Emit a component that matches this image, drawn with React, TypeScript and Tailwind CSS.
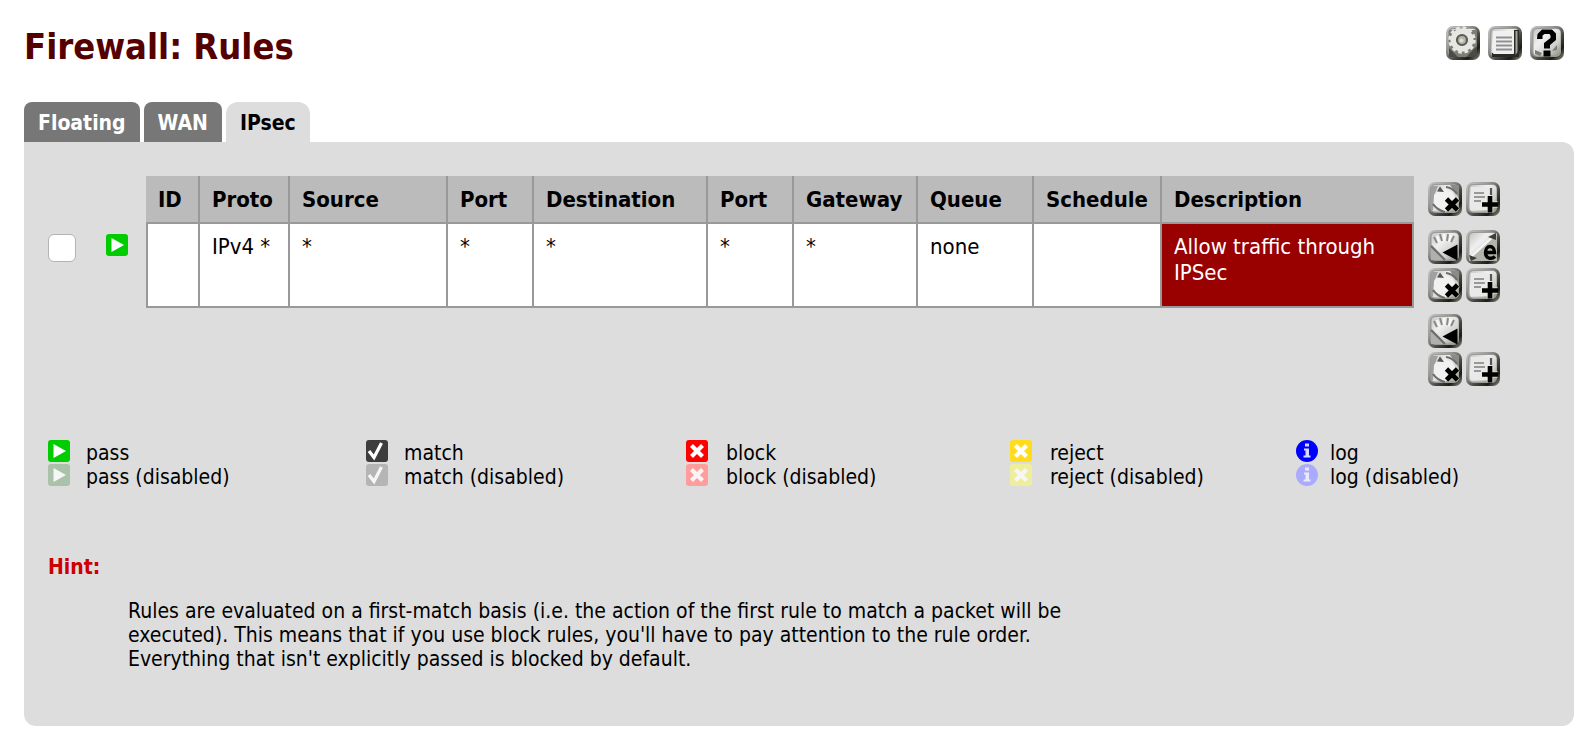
import React from "react";

type StatusKind = "pass" | "match" | "block" | "reject" | "log";

function IconFrame({ id, children }: { id: string; children: React.ReactNode }) {
  return (
    <svg viewBox="0 0 34 34" className="block h-[34px] w-[34px]" aria-hidden="true">
      <defs>
        <linearGradient id={`${id}-edge`} x1="0" y1="0" x2="1" y2="1">
          <stop offset="0" stopColor="#c6c6c6" />
          <stop offset="0.35" stopColor="#989896" />
          <stop offset="0.6" stopColor="#4a4a45" />
          <stop offset="0.8" stopColor="#1c1c16" />
          <stop offset="1" stopColor="#99998c" />
        </linearGradient>
        <linearGradient id={`${id}-face`} x1="0" y1="0" x2="1" y2="1">
          <stop offset="0" stopColor="#c4c4c4" />
          <stop offset="0.35" stopColor="#f0f0f0" />
          <stop offset="0.7" stopColor="#d0d0cc" />
          <stop offset="1" stopColor="#8c8c80" />
        </linearGradient>
        <filter id={`${id}-soft`} x="0" y="0" width="1" height="1">
          <feGaussianBlur stdDeviation="0.7" />
        </filter>
        <clipPath id={`${id}-clip`}>
          <rect width="34" height="34" rx="7" />
        </clipPath>
      </defs>
      <g clipPath={`url(#${id}-clip)`}>
        <rect width="34" height="34" fill={`url(#${id}-edge)`} />
        <g filter={`url(#${id}-soft)`}>
          <rect width="34" height="34" fill="none" />
          <rect x="2" y="2" width="29" height="29" rx="5" fill="#9a9a97" />
          <rect x="3.500" y="3" width="27" height="26.500" rx="4" fill={`url(#${id}-face)`} />
          {children}
        </g>
      </g>
    </svg>
  );
}

function GearIcon() {
  return (
    <IconFrame id="gear">
      <path d="M3 4H31V31H3Z" fill="#7d7d76" />
      <path d="M3 22L12 31H3ZM20 31L31 20V31Z" fill="#4c4c44" />
      <circle cx="16" cy="14" r="12" fill="none" stroke="#e6e6e4" strokeWidth="3.500" strokeDasharray="3.600 2.700" />
      <circle cx="16" cy="14" r="8.500" fill="none" stroke="#e6e6e3" strokeWidth="6" />
      <circle cx="16" cy="14" r="5" fill="#b4b4aa" stroke="#5c5c56" strokeWidth="2.200" />
      <circle cx="15.500" cy="14.500" r="2" fill="#e0dccf" />
    </IconFrame>
  );
}

function LogIcon() {
  return (
    <IconFrame id="page">
      <path d="M26 4H31V31H4V27H26Z" fill="#2c2c28" />
      <path d="M27.500 5H29.500V26L27.500 29Z" fill="#a4a49a" />
      <rect x="5" y="5" width="21" height="23" rx="1" fill="#f0f0f0" />
      <path d="M8 11.500H24M8 15.500H24M8 19.500H24M8 23.500H24" stroke="#909090" strokeWidth="2" />
    </IconFrame>
  );
}

function HelpIcon() {
  return (
    <IconFrame id="help">
      <path d="M5 24L12 27L10 30L5 28ZM22 25L27 19V24Z" fill="#7b7b75" />
      <path d="M7 13H12.500V9.500L14.500 8H19.500L20.500 9.500V12L14 17V22.500H20V19L26 14V7.500L22 3.500H12L7.500 8Z" fill="#000" />
      <rect x="13.500" y="24.500" width="7" height="6" fill="#000" />
    </IconFrame>
  );
}

function DeleteIcon({ id }: { id: string }) {
  return (
    <IconFrame id={id}>
      <path d="M3 4H10L6 14L5 28H3Z" fill="#a0a0a0" />
      <path d="M22 3H31V16Z" fill="#8b8b88" />
      <path d="M6 13L12 7L24 10L29 18L17 30L6 23Z" fill="#f1f1f1" />
      <path d="M9 9.500L16 10L12 4.500Z" fill="#555" />
      <path d="M18 5Q25 6 29 12M5 22Q9 28 17 30" fill="none" stroke="#6d6d6d" strokeWidth="2.200" />
      <path d="M18.500 17L30 28.500M30 17L18.500 28.500" stroke="#ddddc0" strokeWidth="6" opacity="0.5" />
      <path d="M18.500 17L29.500 28M29.500 17L18.500 28" stroke="#000" strokeWidth="4.600" />
    </IconFrame>
  );
}

function AddIcon({ id }: { id: string }) {
  return (
    <IconFrame id={id}>
      <path d="M5 5H25V28H5Z" fill="#e9e9e9" />
      <path d="M25 6V13" stroke="#555" strokeWidth="2.200" />
      <path d="M8 11H18M8 15H19M8 19H15" stroke="#999" strokeWidth="1.800" />
      <path d="M24 14V30.500M16 22.500H32" stroke="#e8e8cf" strokeWidth="7" opacity="0.5" />
      <path d="M24 14V30.500M16 22.500H32" stroke="#000" strokeWidth="4.600" />
    </IconFrame>
  );
}

function MoveIcon({ id }: { id: string }) {
  return (
    <IconFrame id={id}>
      <path d="M3 14L18 30H3Z" fill="#b0b0ae" />
      <path d="M6 7L9 13M12 4L14 11M20 4L19 11M26 6L23 12" stroke="#8a8a8a" strokeWidth="2" />
      <path d="M9 6L11 12M16 4V11M23 5L21 12" stroke="#fafafa" strokeWidth="1.800" />
      <path d="M3 16L17 30" stroke="#6e6e6e" strokeWidth="2.200" />
      <path d="M14.500 22.500L29.500 14.500V30.500Z" fill="#000" />
    </IconFrame>
  );
}

function EditIcon() {
  return (
    <IconFrame id="edit">
      <path d="M31 3L3 28V31H31Z" fill="#b4b4ac" />
      <path d="M30 4L5 27" stroke="#f6f6f6" strokeWidth="2.200" />
      <path d="M22 7L30 3V10ZM3 25L11 28L5 31Z" fill="#3c3c3a" />
      <path d="M18.500 22.500H28.500C28.500 14.500 19.500 14.500 19.500 22.500C19.500 29 26 29.500 29 26.500" fill="none" stroke="#000" strokeWidth="3.400" />
    </IconFrame>
  );
}

const tileColors: Record<StatusKind, [string, string]> = {
  pass: ["#00cc00", "#a9c2a9"],
  match: ["#3d3d3d", "#b5b5b5"],
  block: ["#ff0000", "#ff9c9c"],
  reject: ["#ffdc1e", "#eeee9c"],
  log: ["#0000ff", "#aaaaff"],
};

function StatusIcon({ kind, disabled = false }: { kind: StatusKind; disabled?: boolean }) {
  const fill = tileColors[kind][disabled ? 1 : 0];
  const mark = disabled ? "#f6f6f6" : "#fff";
  return (
    <svg viewBox="0 0 22 22" className="block h-[22px] w-[22px] shrink-0" aria-hidden="true">
      {kind === "log" ? (
        <circle cx="11" cy="11" r="11" fill={fill} />
      ) : (
        <rect width="22" height="22" rx="3" fill={fill} />
      )}
      {kind === "pass" && <path d="M5.500 4L18 11L5.500 18Z" fill={mark} />}
      {kind === "match" && <path d="M3 11L8 17.500L15.500 3" fill="none" stroke={mark} strokeWidth="3.200" />}
      {(kind === "block" || kind === "reject") && (
        <path d="M5.500 5.500L16.500 16.500M16.500 5.500L5.500 16.500" stroke={mark} strokeWidth="4.200" />
      )}
      {kind === "log" && (
        <path d="M9 3.500H13V6.500H9ZM8 8.500H13V15.500H14.500V17.500H7.500V15.500H9.500V10.500H8Z" fill={mark} opacity="0.85" />
      )}
    </svg>
  );
}

function IconButton({ label, children }: { label: string; children: React.ReactNode }) {
  return (
    <button type="button" aria-label={label} className="block cursor-pointer">
      {children}
    </button>
  );
}

const tabs = [
  { label: "Floating", active: false },
  { label: "WAN", active: false },
  { label: "IPsec", active: true },
];

const columns = [
  { label: "ID", width: "w-[54px]", value: "" },
  { label: "Proto", width: "w-[90px]", value: "IPv4 *" },
  { label: "Source", width: "w-[158px]", value: "*" },
  { label: "Port", width: "w-[86px]", value: "*" },
  { label: "Destination", width: "w-[174px]", value: "*" },
  { label: "Port", width: "w-[86px]", value: "*" },
  { label: "Gateway", width: "w-[124px]", value: "*" },
  { label: "Queue", width: "w-[116px]", value: "none" },
  { label: "Schedule", width: "w-[128px]", value: "" },
];

const legend: { kind: StatusKind; width: string; gap: string }[] = [
  { kind: "pass", width: "w-[318px]", gap: "gap-4" },
  { kind: "match", width: "w-[320px]", gap: "gap-4" },
  { kind: "block", width: "w-[324px]", gap: "gap-[18px]" },
  { kind: "reject", width: "w-[286px]", gap: "gap-[18px]" },
  { kind: "log", width: "w-[200px]", gap: "gap-3" },
];

export default function App() {
  return (
    <main className="min-h-screen bg-white px-6 pr-5 pt-[26px] pb-6 font-['DejaVu_Sans_Condensed','DejaVu_Sans',sans-serif] text-[22px] leading-[26px] text-black">
      <header className="flex h-[76px] items-start justify-between pr-[10px]">
        <h1 className="text-[36px] leading-[42px] font-bold text-[#550000]">Firewall: Rules</h1>
        <div className="flex gap-2">
          <IconButton label="Settings"><GearIcon /></IconButton>
          <IconButton label="Logs"><LogIcon /></IconButton>
          <IconButton label="Help"><HelpIcon /></IconButton>
        </div>
      </header>

      <nav className="flex h-10 gap-1 text-[21px]">
        {tabs.map((tab) => (
          <a
            key={tab.label}
            href="#"
            className={
              tab.active
                ? "rounded-t-xl bg-[#dddddd] px-[14px] py-2 font-bold"
                : "rounded-t-lg bg-[#777777] px-[14px] py-2 font-bold text-white"
            }
          >
            {tab.label}
          </a>
        ))}
      </nav>

      <section className="rounded-r-xl rounded-bl-xl bg-[#dddddd] px-6 pt-[34px] pb-[55px]">
        <table className="w-full table-fixed border-separate border-spacing-0 text-left align-top">
          <colgroup>
            <col className="w-[58px]" />
            <col className="w-[40px]" />
            {columns.map((c, i) => (
              <col key={i} className={c.width} />
            ))}
            <col />
            <col className="w-[136px]" />
          </colgroup>
          <thead>
            <tr className="h-12">
              <td />
              <td />
              {columns.map((c, i) => (
                <th key={i} className="border-r-2 border-b-2 border-[#999999] bg-[#bbbbbb] pt-[2px] pl-3 font-bold">
                  {c.label}
                </th>
              ))}
              <th className="border-b-2 border-[#999999] bg-[#bbbbbb] pt-[2px] pl-3 font-bold">Description</th>
              <td className="pt-[6px] pl-[14px] align-top">
                <div className="flex gap-1">
                  <IconButton label="Delete selected rules"><DeleteIcon id="del-top" /></IconButton>
                  <IconButton label="Add rule to top"><AddIcon id="add-top" /></IconButton>
                </div>
              </td>
            </tr>
          </thead>
          <tbody>
            <tr className="h-[84px] align-top">
              <td className="pt-[10px]">
                <input
                  type="checkbox"
                  aria-label="Select rule"
                  className="block h-7 w-7 appearance-none rounded-md border border-[#b4b4b4] bg-white"
                />
              </td>
              <td className="pt-[10px]"><StatusIcon kind="pass" /></td>
              {columns.map((c, i) => (
                <td
                  key={i}
                  className="border-r-2 border-b-2 border-[#999999] bg-white pt-[10px] pl-3 whitespace-nowrap nth-3:border-l-2"
                >
                  {c.value}
                </td>
              ))}
              <td className="border-r-2 border-b-2 border-[#999999] bg-[#990000] pt-[10px] pl-3 text-white">
                Allow traffic through IPSec
              </td>
              <td className="pt-[6px] pl-[14px]">
                <div className="grid w-[72px] grid-cols-2 gap-1">
                  <IconButton label="Move selected rules before this rule"><MoveIcon id="move-row" /></IconButton>
                  <IconButton label="Edit rule"><EditIcon /></IconButton>
                  <IconButton label="Delete rule"><DeleteIcon id="del-row" /></IconButton>
                  <IconButton label="Copy rule"><AddIcon id="add-row" /></IconButton>
                </div>
              </td>
            </tr>
            <tr className="align-top">
              <td colSpan={12} />
              <td className="pt-[6px] pl-[14px]">
                <div className="grid w-[72px] grid-cols-2 gap-1">
                  <IconButton label="Move selected rules to end"><MoveIcon id="move-end" /></IconButton>
                  <span />
                  <IconButton label="Delete selected rules"><DeleteIcon id="del-end" /></IconButton>
                  <IconButton label="Add new rule"><AddIcon id="add-end" /></IconButton>
                </div>
              </td>
            </tr>
          </tbody>
        </table>

        <div className="mt-[54px] flex text-[21px]">
          {legend.map((item) => (
            <ul key={item.kind} className={item.width}>
              <li className={`flex h-6 ${item.gap}`}>
                <StatusIcon kind={item.kind} />
                {item.kind}
              </li>
              <li className={`flex h-6 ${item.gap}`}>
                <StatusIcon kind={item.kind} disabled />
                {item.kind} (disabled)
              </li>
            </ul>
          ))}
        </div>

        <div className="mt-[67px] text-[21px] leading-6">
          <h2 className="font-bold text-[#cc0000]">Hint:</h2>
          <p className="mt-5 ml-20 max-w-[960px]">
            Rules are evaluated on a first-match basis (i.e. the action of the first rule to match a packet will be
            executed). This means that if you use block rules, you'll have to pay attention to the rule order.
            Everything that isn't explicitly passed is blocked by default.
          </p>
        </div>
      </section>
    </main>
  );
}
